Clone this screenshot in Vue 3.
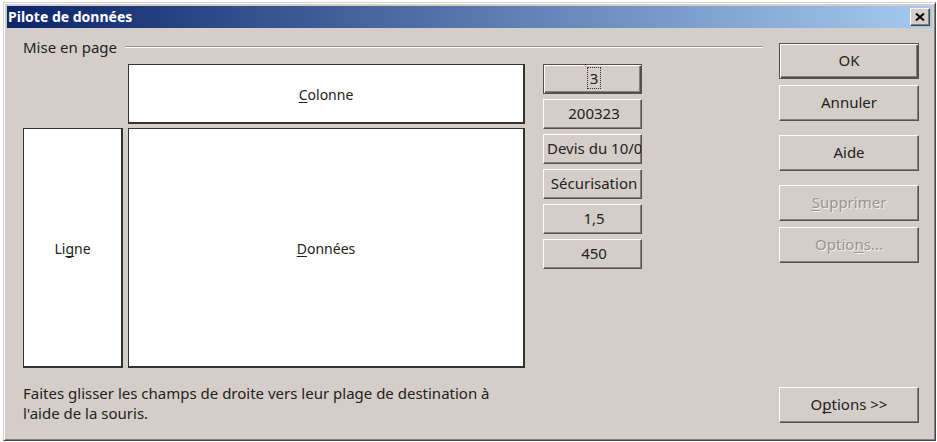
<script setup>
import { ref } from 'vue'

const fields = ['3', '200323', 'Devis du 10/0', 'Sécurisation', '1,5', '450']
const selected = ref(0)
</script>

<template>
  <main class="dialog" role="dialog" aria-labelledby="dialog-title">
    <header class="titlebar">
      <h1 id="dialog-title">Pilote de données</h1>
      <button class="close" type="button" aria-label="Fermer">
        <svg viewBox="0 0 10 8" width="10" height="8" aria-hidden="true">
          <path d="M1 0.5 L9 7.5 M9 0.5 L1 7.5" stroke="#000" stroke-width="2" fill="none" />
        </svg>
      </button>
    </header>

    <div class="content">
      <section class="layout" aria-labelledby="layout-title">
        <div class="legend">
          <h2 id="layout-title">Mise en page</h2>
          <span class="rule"></span>
        </div>
        <div class="board">
          <div class="zones">
            <div class="zone column"><span><u>C</u>olonne</span></div>
            <div class="zone row"><span>Li<u>g</u>ne</span></div>
            <div class="zone data"><span><u>D</u>onnées</span></div>
          </div>
          <div class="fields">
            <button
              v-for="(field, i) in fields"
              :key="field"
              type="button"
              class="btn field"
              :class="{ active: selected === i }"
              @click="selected = i"
            >
              <span class="caption">{{ field }}</span>
            </button>
          </div>
        </div>
        <p class="hint">Faites glisser les champs de droite vers leur plage de destination à l'aide de la souris.</p>
      </section>

      <div class="actions">
        <button type="button" class="btn active">OK</button>
        <button type="button" class="btn">Annuler</button>
        <button type="button" class="btn spaced">Aide</button>
        <button type="button" class="btn spaced" disabled><span><u>S</u>upprimer</span></button>
        <button type="button" class="btn" disabled><span>Optio<u>n</u>s...</span></button>
        <button type="button" class="btn more"><span>O<u>p</u>tions &gt;&gt;</span></button>
      </div>
    </div>
  </main>
</template>

<style>
body {
  background: #fff;
}
</style>

<style scoped>
.dialog {
  box-sizing: border-box;
  margin: 2px 1px 0 3px;
  padding: 2px;
  border: 1px solid;
  border-color: #d6cfc8 #484442 #484442 #d6cfc8;
  box-shadow: inset 1px 1px #fff, inset -1px -1px #85807b;
  background: #d5cec8;
  color: #222;
  font-family: "Noto Sans", "Open Sans", sans-serif;
  font-size: 15px;
  line-height: 20px;
}

h1,
h2,
p {
  margin: 0;
  font: inherit;
}

u {
  text-decoration: underline;
  text-decoration-thickness: 1px;
  text-underline-offset: 2px;
  text-decoration-skip-ink: none;
}

.titlebar {
  display: flex;
  align-items: center;
  justify-content: space-between;
  height: 22px;
  margin: 1px 1px 0;
  padding: 0 2px 0 1px;
  background: linear-gradient(90deg, #0b246a, #a6caf0);
}

.titlebar h1 {
  color: #fff;
  font-size: 14px;
  font-weight: 700;
}

.close {
  display: flex;
  align-items: center;
  justify-content: center;
  width: 20px;
  height: 18px;
  padding: 0;
  border: 1px solid;
  border-color: #fff #484442 #484442 #fff;
  box-shadow: inset -1px -1px #85807b;
  background: #d5cec8;
}

.content {
  display: flex;
  gap: 16px;
  padding: 9px 14px 15px 17px;
}

.layout {
  flex: 1;
  min-width: 0;
}

.legend {
  display: flex;
  align-items: center;
  gap: 8px;
}

.rule {
  flex: 1;
  height: 1px;
  border-top: 1px solid #96908a;
  background: #fff;
}

.board {
  display: flex;
  gap: 18px;
  margin-top: 7px;
  padding-right: 121px;
}

.zones {
  flex: 1;
  display: grid;
  grid-template-columns: 100px 1fr;
  grid-template-rows: 60px 240px;
  gap: 4px 5px;
  font-size: 14px;
}

.zone {
  display: flex;
  align-items: center;
  justify-content: center;
  padding-top: 2px;
  border: 2px solid #333;
  border-width: 1px 2px 2px 1px;
  background: #fff;
}

.column {
  grid-column: 2;
}

.fields {
  display: flex;
  flex-direction: column;
  gap: 5px;
  width: 99px;
}

.btn {
  display: flex;
  align-items: center;
  justify-content: center;
  box-sizing: border-box;
  height: 36px;
  padding: 0 0 2px;
  border: 1px solid;
  border-color: #fff #55504c #55504c #fff;
  box-shadow: inset -1px -1px #85807b;
  background: #d5cec8;
  color: #222;
  font: inherit;
  overflow: hidden;
  white-space: nowrap;
}

.btn.active {
  border-color: #55504c;
  box-shadow: inset 1px 1px #fff, inset -1px -1px #55504c, inset -2px -2px #85807b;
}

.btn:disabled {
  color: #9a948e;
  text-shadow: 1px 1px #f4f0ec;
}

.field {
  height: 30px;
  justify-content: safe center;
  padding-left: 3px;
}

.field.active .caption {
  padding: 0 2px;
  outline: 1px dotted #333;
}

.hint {
  max-width: 500px;
  margin-top: 15px;
}

.actions {
  display: flex;
  flex-direction: column;
  gap: 6px;
  width: 140px;
  padding-top: 6px;
}

.spaced {
  margin-top: 8px;
}

.more {
  margin-top: auto;
}
</style>
